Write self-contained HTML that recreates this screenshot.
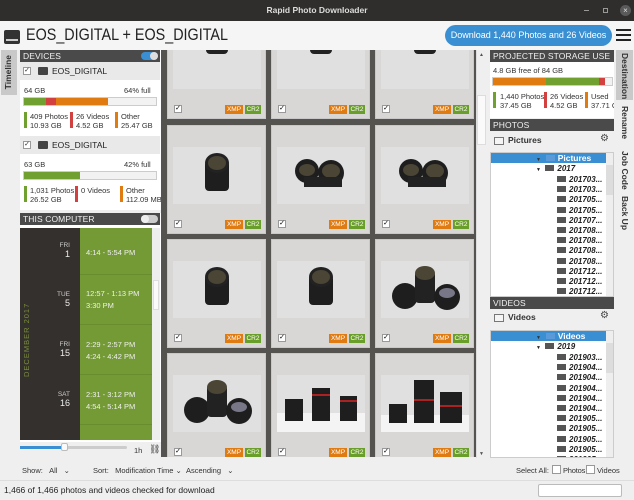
<!DOCTYPE html>
<html><head><meta charset="utf-8"><style>
*{box-sizing:border-box;margin:0;padding:0}
body{width:634px;height:500px;overflow:hidden;background:#efefef;font-family:"Liberation Sans","DejaVu Sans",sans-serif;position:relative;color:#333}
.a{position:absolute}
.hdr{position:absolute;background:#4a4a4a;color:#f0f0f0;font-size:8.5px;padding:2px 3px;height:12px;line-height:9px;letter-spacing:.1px}
.t{position:absolute;font-size:7.5px;color:#333;white-space:nowrap;line-height:9px}
.cell{position:absolute;width:99px;height:109px;background:#d8d7d5;border:1px solid #c8c8c8}
.th{position:absolute;left:5px;top:21px;width:88px;height:57px;background:#e0e0e0}
.ck{position:absolute;left:6px;top:94px;width:8px;height:8px;background:#fff;border:1px solid #999;font-size:7px;line-height:6px;text-align:center;color:#000}
.bx{position:absolute;top:94px;height:9px;font-size:6.5px;line-height:9px;color:#fff;text-align:center}
.x{left:57px;width:18px;background:#e07b12}
.c{left:77px;width:16px;background:#6a9e2a}
.sw{position:absolute;width:3px}
.tree{position:absolute;font-size:8px;font-style:italic;font-weight:bold;color:#222;white-space:nowrap}
.fd{display:inline-block;width:9px;height:6px;background:#555;margin-right:3px;vertical-align:0}
.vt{position:absolute;writing-mode:vertical-rl;font-size:8.5px;font-weight:bold;color:#333}
</style></head><body>
<!-- title bar -->
<div class="a" style="left:0;top:0;width:634px;height:21px;background:#2f2e2c"></div>
<div class="a" style="left:0;top:5px;width:634px;text-align:center;color:#ddd;font-size:8.5px;font-weight:bold">Rapid Photo Downloader</div>
<div class="a" style="left:584px;top:10px;width:5px;height:1px;background:#999"></div>
<div class="a" style="left:603px;top:8px;width:5px;height:5px;border:1px solid #999"></div>
<div class="a" style="left:620px;top:5px;width:11px;height:11px;border-radius:50%;background:#5a5a5a;color:#ddd;font-size:8px;line-height:11px;text-align:center">×</div>
<!-- header -->
<div class="a" style="left:0;top:21px;width:634px;height:29px;background:#f5f5f5"></div>
<div class="a" style="left:4px;top:30px;width:16px;height:14px;border-radius:2px;background:#333"></div>
<div class="a" style="left:6px;top:39px;width:12px;height:2px;background:#ccc"></div>
<div class="a" style="left:26px;top:26px;font-size:16.5px;color:#222;transform:scaleX(0.87);transform-origin:0 0;white-space:nowrap">EOS_DIGITAL + EOS_DIGITAL</div>
<div class="a" style="left:445px;top:25px;width:167px;height:21px;border-radius:11px;background:#3a8fd2;color:#fff;font-size:9px;line-height:21px;text-align:center">Download 1,440 Photos and 26 Videos</div>
<div class="a" style="left:616px;top:29px;width:15px;height:2px;background:#222;box-shadow:0 5px 0 #222,0 10px 0 #222"></div>
<!-- left tab -->
<div class="a" style="left:1px;top:50px;width:16px;height:45px;background:#c9c9c9"></div>
<div class="vt" style="left:3px;top:55px;transform:rotate(180deg)">Timeline</div>
<!-- left panel -->
<div class="a" style="left:20px;top:50px;width:141px;height:410px;background:#fff"></div>
<div class="hdr" style="left:20px;top:50px;width:140px">DEVICES</div>
<div class="a" style="left:141px;top:52px;width:17px;height:8px;border-radius:4px;background:#3a8fd2"></div>
<div class="a" style="left:150px;top:52px;width:8px;height:8px;border-radius:4px;background:#ddd"></div>
<div class="a" style="left:20px;top:62px;width:140px;height:18px;background:#e9e9e9"></div>
<div class="a" style="left:23px;top:67px;width:8px;height:8px;background:#fff;border:1px solid #999;font-size:7px;line-height:6px;text-align:center">✓</div>
<div class="a" style="left:38px;top:67px;width:10px;height:8px;background:#444;border-radius:1px"></div>
<div class="t" style="left:52px;top:67px;font-size:8.5px;color:#222">EOS_DIGITAL</div>
<div class="t" style="left:24px;top:86px">64 GB</div><div class="t" style="left:124px;top:86px">64% full</div>
<div class="a" style="left:23px;top:97px;width:134px;height:9px;background:#f2f2f2;border:1px solid #ccc"></div>
<div class="a" style="left:24px;top:98px;width:22px;height:7px;background:#6fa030"></div>
<div class="a" style="left:46px;top:98px;width:10px;height:7px;background:#d34040"></div>
<div class="a" style="left:56px;top:98px;width:52px;height:7px;background:#e07b12"></div>
<div class="sw" style="left:24px;top:112px;height:16px;background:#6fa030"></div><div class="t" style="left:30px;top:112px">409 Photos<br>10.93 GB</div>
<div class="sw" style="left:70px;top:112px;height:16px;background:#d34040"></div><div class="t" style="left:76px;top:112px">26 Videos<br>4.52 GB</div>
<div class="sw" style="left:115px;top:112px;height:16px;background:#e07b12"></div><div class="t" style="left:121px;top:112px">Other<br>25.47 GB</div>
<div class="a" style="left:20px;top:136px;width:140px;height:18px;background:#e9e9e9"></div>
<div class="a" style="left:23px;top:141px;width:8px;height:8px;background:#fff;border:1px solid #999;font-size:7px;line-height:6px;text-align:center">✓</div>
<div class="a" style="left:38px;top:141px;width:10px;height:8px;background:#444;border-radius:1px"></div>
<div class="t" style="left:52px;top:141px;font-size:8.5px;color:#222">EOS_DIGITAL</div>
<div class="t" style="left:24px;top:160px">63 GB</div><div class="t" style="left:124px;top:160px">42% full</div>
<div class="a" style="left:23px;top:171px;width:134px;height:9px;background:#f2f2f2;border:1px solid #ccc"></div>
<div class="a" style="left:24px;top:172px;width:56px;height:7px;background:#6fa030"></div>
<div class="sw" style="left:24px;top:186px;height:16px;background:#6fa030"></div><div class="t" style="left:30px;top:186px">1,031 Photos<br>26.52 GB</div>
<div class="sw" style="left:75px;top:186px;height:16px;background:#d34040"></div><div class="t" style="left:81px;top:186px">0 Videos</div>
<div class="sw" style="left:120px;top:186px;height:16px;background:#e07b12"></div><div class="t" style="left:126px;top:186px">Other<br>112.09 MB</div>
<div class="a" style="left:20px;top:210px;width:141px;height:3px;background:#efefef"></div>
<div class="hdr" style="left:20px;top:213px;width:140px">THIS COMPUTER</div>
<div class="a" style="left:141px;top:215px;width:17px;height:8px;border-radius:4px;background:#ccc"></div>
<div class="a" style="left:141px;top:215px;width:8px;height:8px;border-radius:4px;background:#eee"></div>
<!-- timeline -->
<div class="a" style="left:20px;top:228px;width:60px;height:212px;background:#33302d"></div>
<div class="a" style="left:80px;top:228px;width:72px;height:212px;background:#739a34"></div>
<div class="a" style="left:152px;top:228px;width:8px;height:212px;background:#eee"></div>
<div class="a" style="left:153px;top:280px;width:6px;height:30px;background:#fafafa;border:1px solid #ddd"></div>
<div class="a" style="left:80px;top:274px;width:72px;height:1px;background:#688c2e;box-shadow:0 50px 0 #688c2e,0 100px 0 #688c2e,0 150px 0 #688c2e"></div>
<div class="a" style="left:22px;top:290px;width:22px;height:100px;writing-mode:vertical-rl;transform:rotate(180deg);font-size:7.5px;color:#7a8d3c;letter-spacing:1px;text-align:center">DECEMBER 2017</div>
<div class="t" style="left:50px;top:241px;width:20px;text-align:right;color:#ccc;font-size:6.5px">FRI</div><div class="t" style="left:50px;top:250px;width:20px;text-align:right;color:#eee;font-size:9px">1</div>
<div class="t" style="left:50px;top:290px;width:20px;text-align:right;color:#ccc;font-size:6.5px">TUE</div><div class="t" style="left:50px;top:299px;width:20px;text-align:right;color:#eee;font-size:9px">5</div>
<div class="t" style="left:50px;top:340px;width:20px;text-align:right;color:#ccc;font-size:6.5px">FRI</div><div class="t" style="left:50px;top:349px;width:20px;text-align:right;color:#eee;font-size:9px">15</div>
<div class="t" style="left:50px;top:390px;width:20px;text-align:right;color:#ccc;font-size:6.5px">SAT</div><div class="t" style="left:50px;top:399px;width:20px;text-align:right;color:#eee;font-size:9px">16</div>
<div class="t" style="left:86px;top:248px;color:#f0f0f0">4:14 - 5:54 PM</div>
<div class="t" style="left:86px;top:289px;color:#f0f0f0">12:57 - 1:13 PM</div><div class="t" style="left:86px;top:301px;color:#f0f0f0">3:30 PM</div>
<div class="t" style="left:86px;top:340px;color:#f0f0f0">2:29 - 2:57 PM</div><div class="t" style="left:86px;top:352px;color:#f0f0f0">4:24 - 4:42 PM</div>
<div class="t" style="left:86px;top:390px;color:#f0f0f0">2:31 - 3:12 PM</div><div class="t" style="left:86px;top:402px;color:#f0f0f0">4:54 - 5:14 PM</div>
<!-- slider -->
<div class="a" style="left:20px;top:442px;width:141px;height:18px;background:#efefef"></div>
<div class="a" style="left:20px;top:446px;width:107px;height:3px;background:#ccc;border-radius:2px"></div>
<div class="a" style="left:20px;top:446px;width:45px;height:3px;background:#3a8fd2"></div>
<div class="a" style="left:61px;top:443px;width:7px;height:8px;background:#fafafa;border:1px solid #bbb;border-radius:2px"></div>
<div class="t" style="left:134px;top:446px">1h</div>
<div class="t" style="left:149px;top:445px;font-size:9px">⛓</div>
<!-- grid -->
<div class="a" id="gc" style="left:161px;top:50px;width:315px;height:407px;background:#555350;overflow:hidden"></div>
<div class="a" style="left:476px;top:50px;width:11px;height:408px;background:#efefef;border-left:1px solid #ddd"></div>
<div class="a" style="left:479px;top:52px;font-size:5px;color:#555">▲</div>
<div class="a" style="left:479px;top:451px;font-size:5px;color:#555">▼</div>
<div class="a" style="left:477px;top:95px;width:9px;height:50px;background:#fafafa;border:1px solid #ddd"></div>
<!-- bottom -->
<div class="t" style="left:22px;top:466px;color:#333">Show:&nbsp;&nbsp;&nbsp;All&nbsp;&nbsp;&nbsp;⌄</div>
<div class="t" style="left:93px;top:466px;color:#333">Sort:&nbsp;&nbsp;&nbsp;Modification Time ⌄&nbsp;&nbsp;Ascending&nbsp;&nbsp;&nbsp;⌄</div>
<div class="t" style="left:516px;top:466px">Select All:</div>
<div class="a" style="left:552px;top:465px;width:9px;height:9px;background:#fff;border:1px solid #999"></div><div class="t" style="left:563px;top:466px;letter-spacing:-.2px">Photos</div>
<div class="a" style="left:586px;top:465px;width:9px;height:9px;background:#fff;border:1px solid #999"></div><div class="t" style="left:597px;top:466px">Videos</div>
<div class="a" style="left:0;top:480px;width:634px;height:1px;background:#ddd"></div>
<div class="t" style="left:4px;top:486px;font-size:8.5px;color:#222">1,466 of 1,466 photos and videos checked for download</div>
<div class="a" style="left:538px;top:484px;width:84px;height:13px;background:#fff;border:1px solid #bbb;border-radius:2px"></div>
<!-- right panel -->
<div class="hdr" style="left:490px;top:50px;width:124px">PROJECTED STORAGE USE</div>
<div class="a" style="left:490px;top:62px;width:124px;height:56px;background:#fff"></div>
<div class="t" style="left:493px;top:66px">4.8 GB free of 84 GB</div>
<div class="a" style="left:492px;top:77px;width:121px;height:9px;background:#f2f2f2;border:1px solid #ccc"></div>
<div class="a" style="left:493px;top:78px;width:53px;height:7px;background:#e07b12"></div>
<div class="a" style="left:546px;top:78px;width:53px;height:7px;background:#6fa030"></div>
<div class="a" style="left:599px;top:78px;width:6px;height:7px;background:#d34040"></div>
<div class="sw" style="left:493px;top:92px;height:16px;background:#6fa030"></div><div class="t" style="left:500px;top:92px">1,440 Photos<br>37.45 GB</div>
<div class="sw" style="left:544px;top:92px;height:16px;background:#d34040"></div><div class="t" style="left:550px;top:92px">26 Videos<br>4.52 GB</div>
<div class="sw" style="left:585px;top:92px;height:16px;background:#e07b12"></div><div class="a" style="left:591px;top:92px;width:23px;overflow:hidden"><div class="t" style="position:static">Used<br>37.71 GB</div></div>
<div class="hdr" style="left:490px;top:119px;width:124px">PHOTOS</div>
<div class="a" style="left:494px;top:137px;width:10px;height:8px;border:1px solid #777;background:#f5f5f5"></div>
<div class="t" style="left:508px;top:136px;font-size:8.5px;font-weight:bold;color:#333">Pictures</div>
<div class="t" style="left:600px;top:134px;font-size:10px;color:#444">⚙</div>
<div class="a" style="left:490px;top:152px;width:124px;height:145px;background:#fff;border:1px solid #ccc;overflow:hidden" id="pt"></div>
<div class="hdr" style="left:490px;top:297px;width:124px">VIDEOS</div>
<div class="a" style="left:494px;top:314px;width:10px;height:8px;border:1px solid #777;background:#f5f5f5"></div>
<div class="t" style="left:508px;top:313px;font-size:8.5px;font-weight:bold;color:#333">Videos</div>
<div class="t" style="left:600px;top:311px;font-size:10px;color:#444">⚙</div>
<div class="a" style="left:490px;top:330px;width:124px;height:128px;background:#fff;border:1px solid #ccc;overflow:hidden" id="vt"></div>
<!-- right tabs -->
<div class="a" style="left:616px;top:50px;width:17px;height:50px;background:#c9c9c9"></div>
<div class="vt" style="left:620px;top:53px">Destination</div>
<div class="vt" style="left:620px;top:106px">Rename</div>
<div class="vt" style="left:620px;top:151px">Job Code</div>
<div class="vt" style="left:620px;top:196px">Back Up</div>
<script>
var cols=[6,110,214],rows=[-40,75,189,303],h='';
function lens(t){var s='<svg class="th" viewBox="0 0 88 57">';
if(t==0)s+='<rect x="33" y="-4" width="22" height="26" rx="4" fill="#222"/><ellipse cx="44" cy="4" rx="8" ry="6" fill="#555"/>';
if(t==1)s+='<rect x="32" y="14" width="24" height="30" rx="4" fill="#1e1e1e"/><ellipse cx="44" cy="16" rx="12" ry="10" fill="#222"/><ellipse cx="44" cy="16" rx="9" ry="7" fill="#4a4535"/>';
if(t==2)s+='<circle cx="30" cy="24" r="12" fill="#1e1e1e"/><circle cx="54" cy="26" r="13" fill="#1e1e1e"/><ellipse cx="30" cy="23" rx="8" ry="6" fill="#4a4535"/><ellipse cx="54" cy="24" rx="9" ry="7" fill="#4a4535"/><rect x="27" y="30" width="38" height="10" fill="#222"/>';
if(t==3)s+='<circle cx="24" cy="35" r="13" fill="#1e1e1e"/><rect x="34" y="10" width="20" height="32" rx="4" fill="#222"/><ellipse cx="44" cy="12" rx="10" ry="7" fill="#4a4535"/><circle cx="66" cy="36" r="13" fill="#1e1e1e"/><ellipse cx="66" cy="32" rx="8" ry="5" fill="#778"/>';
if(t==4)s+='<rect x="0" y="38" width="88" height="19" fill="#f4f4f4"/><rect x="8" y="24" width="18" height="22" fill="#1e1e1e"/><rect x="35" y="13" width="18" height="33" fill="#1e1e1e"/><rect x="35" y="19" width="18" height="2" fill="#a22"/><rect x="63" y="21" width="17" height="25" fill="#1e1e1e"/><rect x="63" y="25" width="17" height="2" fill="#a22"/>';
if(t==5)s+='<rect x="0" y="40" width="88" height="17" fill="#f4f4f4"/><rect x="8" y="29" width="18" height="19" fill="#1e1e1e"/><rect x="33" y="5" width="20" height="43" fill="#1e1e1e"/><rect x="33" y="24" width="20" height="2" fill="#a22"/><rect x="59" y="17" width="22" height="31" fill="#1e1e1e"/><rect x="59" y="30" width="22" height="2" fill="#a22"/>';
return s+'</svg>';}
var types=[0,0,0,1,2,2,1,1,3,3,4,5];
for(var r=0;r<4;r++)for(var c=0;c<3;c++){var T=rows[r],L=cols[c],k=r*3+c;
h+='<div class="cell" style="left:'+L+'px;top:'+T+'px">'+lens(types[k])+'<div class="ck">✓</div><div class="bx x">XMP</div><div class="bx c">CR2</div></div>';}
document.getElementById('gc').innerHTML=h;
function tree(id,root,yr,items){var s='<div style="position:absolute;left:0;top:0;width:117px;height:10px;background:#3a8fd2"></div><div class="tree" style="left:45px;top:0;color:#fff;font-style:normal;font-size:8.5px"><span style="font-size:5px;color:#333">▼</span>&nbsp; <span class="fd" style="background:#5a9ad8"></span>'+root+'</div><div class="tree" style="left:45px;top:11px"><span style="font-size:5px">▼</span>&nbsp; <span class="fd"></span>'+yr+'</div>';
for(var i=0;i<items.length;i++)s+='<div class="tree" style="left:66px;top:'+(22+i*10.2)+'px"><span class="fd"></span>'+items[i]+'</div>';
s+='<div style="position:absolute;right:0;top:0;width:7px;height:100%;background:#eee"></div><div style="position:absolute;right:0;top:12px;width:7px;height:30px;background:#ddd"></div>';
document.getElementById(id).innerHTML=s;}
tree('pt','Pictures','2017',['201703...','201703...','201705...','201705...','201707...','201708...','201708...','201708...','201708...','201712...','201712...','201712...']);
tree('vt','Videos','2019',['201903...','201904...','201904...','201904...','201904...','201904...','201905...','201905...','201905...','201905...','201905...']);
</script>
</body></html>
